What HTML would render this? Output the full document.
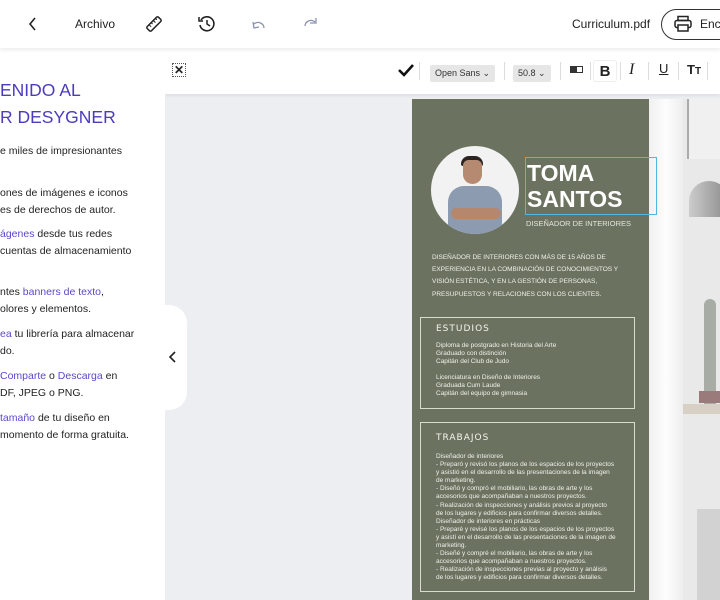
<!DOCTYPE html>
<html><head><meta charset="utf-8"><style>
*{margin:0;padding:0;box-sizing:border-box}
body{width:720px;height:600px;overflow:hidden;background:#eceef2;font-family:"Liberation Sans",sans-serif;position:relative;color:#222}
.top{position:absolute;left:0;top:0;width:720px;height:48px;background:#fff;box-shadow:0 2px 4px rgba(0,0,0,.08);z-index:3}
.top span{position:absolute;font-size:12px;top:17px}
.tb2{position:absolute;left:165px;top:48px;width:555px;height:46px;background:#fff;box-shadow:0 2px 3px rgba(0,0,0,.06);z-index:2}
.left{position:absolute;left:0;top:48px;width:165px;height:552px;background:#fff;z-index:2}
.left h1{position:absolute;left:0;top:29px;font-weight:normal;font-size:17.5px;line-height:27px;color:#4b3bbf}
.left p{position:absolute;left:0;font-size:10.5px;line-height:16.5px;color:#222;white-space:nowrap}
.left a{color:#5b48c8}
.tab{position:absolute;left:120px;top:305px;width:67px;height:105px;background:#fff;border-radius:18px;z-index:1}
.res{position:absolute;left:412px;top:99px;width:237px;height:501px;background:#6b7360;color:#eee}
.photo{position:absolute;left:649px;top:99px;width:71px;height:501px;background:#e9e9e9}
.box{position:absolute;border:1.3px solid #d8dccd}
.sm{font-size:6.5px;line-height:8px;color:#f0f0ea;white-space:nowrap}
.hd{font-family:"DejaVu Sans",sans-serif;font-size:9px;letter-spacing:1px;color:#f4f4ee}
.sel{display:inline-block;background:#e6e6e6;border-radius:2px;font-size:9px;padding:3px 5px;color:#333}
.sep{position:absolute;top:62px;width:1px;height:18px;background:#ddd;z-index:3}
</style></head><body>
<div class="top">
<svg style="position:absolute;left:27px;top:16px" width="12" height="16"><path d="M8 2 L3 8 L8 14" fill="none" stroke="#222" stroke-width="1.6"/></svg>
<span style="left:75px">Archivo</span>
<svg style="position:absolute;left:144px;top:14px" width="20" height="20" viewBox="0 0 20 20"><g transform="rotate(-45 10 10)"><rect x="2" y="7" width="16" height="6" rx="1.5" fill="none" stroke="#222" stroke-width="1.5"/><path d="M6 7v3M9 7v2M12 7v3M15 7v2" stroke="#222" stroke-width="1"/></g></svg>
<svg style="position:absolute;left:197px;top:14px" width="20" height="20" viewBox="0 0 20 20"><path d="M4 6 A7 7 0 1 1 3 11" fill="none" stroke="#222" stroke-width="1.6"/><path d="M2 3v4h4" fill="none" stroke="#222" stroke-width="1.5"/><path d="M10 6v4l3 2" fill="none" stroke="#222" stroke-width="1.5"/></svg>
<svg style="position:absolute;left:250px;top:16px" width="18" height="16"><path d="M4 12 A6 6 0 0 1 14 8" fill="none" stroke="#8a93b0" stroke-width="1.3" transform="scale(-1,1) translate(-18,0)"/><path d="M3 6 L4 12 L9 11" fill="none" stroke="#8a93b0" stroke-width="1.3"/></svg>
<svg style="position:absolute;left:302px;top:16px" width="18" height="16"><path d="M3 10 A6 6 0 0 1 13 6" fill="none" stroke="#8a93b0" stroke-width="1.3"/><path d="M8 7 L14 7 L14 2" fill="none" stroke="#8a93b0" stroke-width="1.3"/></svg>
<span style="left:572px">Curriculum.pdf</span>
<div style="position:absolute;left:661px;top:9px;width:80px;height:31px;border:1.3px solid #333;border-radius:16px"></div>
<svg style="position:absolute;left:673px;top:15px" width="20" height="18" viewBox="0 0 20 18"><rect x="5" y="1.5" width="10" height="4" fill="none" stroke="#222" stroke-width="1.5"/><rect x="2" y="5.5" width="16" height="7" rx="2" fill="none" stroke="#222" stroke-width="1.5"/><rect x="5" y="10" width="10" height="6" fill="#fff" stroke="#222" stroke-width="1.5"/></svg>
<span style="left:700px">Enca</span>
</div>
<div class="tb2">
<div style="position:absolute;left:7px;top:15px;width:14px;height:14px;border:1px dotted #555;font-size:12px;font-weight:bold;text-align:center;line-height:13px">✕</div>
<svg style="position:absolute;left:233px;top:15px" width="16" height="14"><path d="M1 7 L6 12 L15 2" fill="none" stroke="#111" stroke-width="2.6"/></svg>
<div style="position:absolute;left:265px;top:15px"><span class="sel">Open Sans ⌄</span></div>
<div style="position:absolute;left:348px;top:15px"><span class="sel">50.8 ⌄</span></div>
<div style="position:absolute;left:405px;top:18px;width:6px;height:7px;background:#333"></div>
<div style="position:absolute;left:411px;top:18px;width:7px;height:7px;border:1px solid #333"></div>
<div style="position:absolute;left:428px;top:12px;width:24px;height:22px;border:1px solid #eee;border-radius:3px;font-weight:bold;font-size:15px;text-align:center;line-height:21px">B</div>
<div style="position:absolute;left:464px;top:13px;font-family:'Liberation Serif',serif;font-style:italic;font-size:16px">I</div>
<div style="position:absolute;left:494px;top:13px;font-size:13px;text-decoration:underline">U</div>
<div style="position:absolute;left:522px;top:14px;font-weight:bold;font-size:13px">T<span style="font-size:10px">T</span></div>
</div>
<div class="sep" style="left:419px"></div><div class="sep" style="left:504px"></div><div class="sep" style="left:560px"></div><div class="sep" style="left:590px"></div><div class="sep" style="left:620px"></div><div class="sep" style="left:648px"></div><div class="sep" style="left:678px"></div><div class="sep" style="left:707px"></div>
<div class="left">
<h1>ENIDO AL<br>R DESYGNER</h1>
<p style="top:95px">e miles de impresionantes</p>
<p style="top:137px">ones de imágenes e iconos<br>es de derechos de autor.</p>
<p style="top:178px"><a>ágenes</a> desde tus redes<br>cuentas de almacenamiento</p>
<p style="top:236px">ntes <a>banners de texto</a>,<br>olores y elementos.</p>
<p style="top:278px"><a>ea</a> tu librería para almacenar<br>do.</p>
<p style="top:320px"><a>Comparte</a> o <a>Descarga</a> en<br>DF, JPEG o PNG.</p>
<p style="top:362px"><a>tamaño</a> de tu diseño en<br>momento de forma gratuita.</p>
</div>
<div class="tab"><svg style="position:absolute;left:48px;top:45px" width="10" height="14"><path d="M7 2 L2 7 L7 12" fill="none" stroke="#222" stroke-width="1.6"/></svg></div>
<div class="photo">
<div style="position:absolute;left:38px;top:0;width:33px;height:60px;border-left:2px solid #aaa;background:#f0f0f0"></div>
<div style="position:absolute;left:40px;top:82px;width:40px;height:36px;border-radius:20px 20px 0 0;background:linear-gradient(90deg,#ccc,#8a8a8a)"></div>
<div style="position:absolute;left:55px;top:200px;width:12px;height:110px;background:#7c8576;border-radius:6px;opacity:.6"></div>
<div style="position:absolute;left:28px;top:305px;width:43px;height:10px;background:#d8cfc5"></div>
<div style="position:absolute;left:50px;top:292px;width:21px;height:12px;background:#9a7a7a"></div>
<div style="position:absolute;left:48px;top:410px;width:23px;height:91px;background:#d2d2d2"></div>
<div style="position:absolute;left:0;top:0;width:34px;height:501px;background:linear-gradient(90deg,#f0f0f0,#fdfdfd,#eee)"></div>
</div>
<div class="res">
<div style="position:absolute;left:19px;top:47px;width:88px;height:88px;border-radius:50%;background:#f2f2f2;overflow:hidden">
<div style="position:absolute;left:30px;top:10px;width:22px;height:10px;background:#2a2522;border-radius:8px 8px 2px 2px"></div>
<div style="position:absolute;left:32px;top:14px;width:19px;height:24px;background:#b58a70;border-radius:6px 6px 10px 10px"></div>
<div style="position:absolute;left:17px;top:40px;width:54px;height:50px;background:#8d9bb0;border-radius:16px 16px 0 0"></div>
<div style="position:absolute;left:20px;top:62px;width:50px;height:11px;background:#b5876c;border-radius:6px"></div>
</div>
<div style="position:absolute;left:113px;top:58px;width:132px;height:58px;border:1.5px solid #4fb6e0;z-index:2"></div>
<div style="position:absolute;left:115px;top:61px;font-weight:bold;font-size:23px;line-height:26px;color:#fff">TOMA<br>SANTOS</div>
<div style="position:absolute;left:114px;top:120px;font-size:7.5px;color:#e4e6dc">DISEÑADOR DE INTERIORES</div>
<div class="sm" style="position:absolute;left:20px;top:153px;font-size:6.5px;line-height:12.2px">DISEÑADOR DE INTERIORES CON MÁS DE 15 AÑOS DE<br>EXPERIENCIA EN LA COMBINACIÓN DE CONOCIMIENTOS Y<br>VISIÓN ESTÉTICA, Y EN LA GESTIÓN DE PERSONAS,<br>PRESUPUESTOS Y RELACIONES CON LOS CLIENTES.</div>
<div class="box" style="left:8px;top:218px;width:215px;height:92px"></div>
<div class="hd" style="position:absolute;left:24px;top:225px">ESTUDIOS</div>
<div class="sm" style="position:absolute;left:24px;top:243px">Diploma de postgrado en Historia del Arte<br>Graduado con distinción<br>Capitán del Club de Judo<br><br>Licenciatura en Diseño de Interiores<br>Graduada Cum Laude<br>Capitán del equipo de gimnasia</div>
<div class="box" style="left:8px;top:323px;width:215px;height:170px"></div>
<div class="hd" style="position:absolute;left:24px;top:334px">TRABAJOS</div>
<div class="sm" style="position:absolute;left:24px;top:354px;line-height:8.1px">Diseñador de interiores<br>- Preparó y revisó los planos de los espacios de los proyectos<br>y asistió en el desarrollo de las presentaciones de la imagen<br>de marketing.<br>- Diseñó y compró el mobiliario, las obras de arte y los<br>accesorios que acompañaban a nuestros proyectos.<br>- Realización de inspecciones y análisis previos al proyecto<br>de los lugares y edificios para confirmar diversos detalles.<br>Diseñador de interiores en prácticas<br>- Preparé y revisé los planos de los espacios de los proyectos<br>y asistí en el desarrollo de las presentaciones de la imagen de<br>marketing.<br>- Diseñé y compré el mobiliario, las obras de arte y los<br>accesorios que acompañaban a nuestros proyectos.<br>- Realización de inspecciones previas al proyecto y análisis<br>de los lugares y edificios para confirmar diversos detalles.</div>
</div>
</body></html>
